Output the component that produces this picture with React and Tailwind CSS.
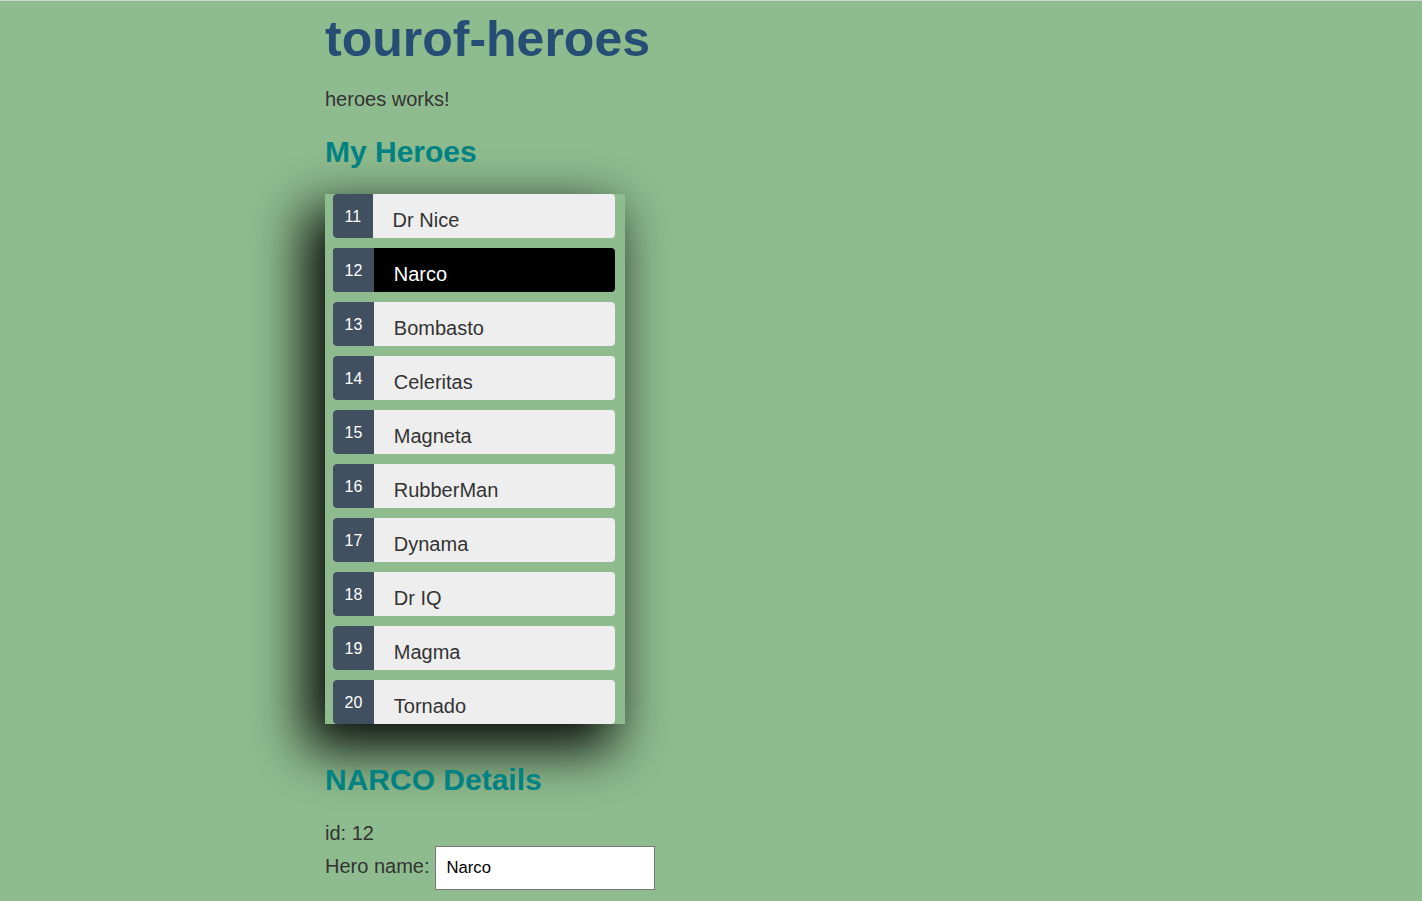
const heroes = [
  { id: 11, name: 'Dr Nice' },
  { id: 12, name: 'Narco' },
  { id: 13, name: 'Bombasto' },
  { id: 14, name: 'Celeritas' },
  { id: 15, name: 'Magneta' },
  { id: 16, name: 'RubberMan' },
  { id: 17, name: 'Dynama' },
  { id: 18, name: 'Dr IQ' },
  { id: 19, name: 'Magma' },
  { id: 20, name: 'Tornado' },
];

const selectedId = 12;

function HeroRow({ hero }) {
  const selected = hero.id === selectedId;
  return (
    <li
      className={
        selected
          ? 'flex h-[44px] w-[282px] ml-[8px] rounded-[4px] bg-black text-white'
          : 'flex h-[44px] w-[282px] ml-[8px] rounded-[4px] bg-[#eeeeee] text-[#333333]'
      }
    >
      <span className="h-full px-[11.5px] pt-[15px] text-[16px] leading-[16px] text-white bg-[#405061] rounded-l-[4px]">
        {hero.id}
      </span>
      <span className="ml-[20px] pt-[14px] text-[20px] leading-[24px]">{hero.name}</span>
    </li>
  );
}

export default function App() {
  const selected = heroes.find((h) => h.id === selectedId);

  return (
    <div className="min-h-screen bg-[#8fbc8f] text-[#333333] font-['Liberation_Sans',Arial,sans-serif]">
      <div className="h-px bg-[#cfd4cf]" />
      <div className="pl-[325px] pb-[11px]">
        <h1 className="mt-[13px] text-[50px] leading-[50px] font-bold text-[#264d73]">tourof-heroes</h1>
        <p className="mt-[23px] text-[20px] leading-[24px]">heroes works!</p>

        <h2 className="mt-[23px] text-[30px] leading-[36px] font-bold text-[#008282]">My Heroes</h2>
        <ul className="mt-[24px] w-[300px] h-[530px] flex flex-col gap-[10px] bg-[#8fbc8f] shadow-[-15px_20px_50px_5px_rgba(0,0,0,0.95)]">
          {heroes.map((hero) => (
            <HeroRow key={hero.id} hero={hero} />
          ))}
        </ul>

        <h2 className="mt-[38px] text-[30px] leading-[36px] font-bold text-[#008282]">
          {selected.name.toUpperCase()} Details
        </h2>
        <div className="mt-[23px] text-[20px] leading-[24px]">id: {selected.id}</div>
        <div className="mt-px flex items-baseline text-[20px] leading-[24px]">
          <label>Hero name:</label>
          <input
            className="ml-[5px] w-[220px] h-[44px] border border-[#767676] bg-white pl-[11px] text-[16.67px] text-black outline-none"
            defaultValue={selected.name}
          />
        </div>
      </div>
    </div>
  );
}
